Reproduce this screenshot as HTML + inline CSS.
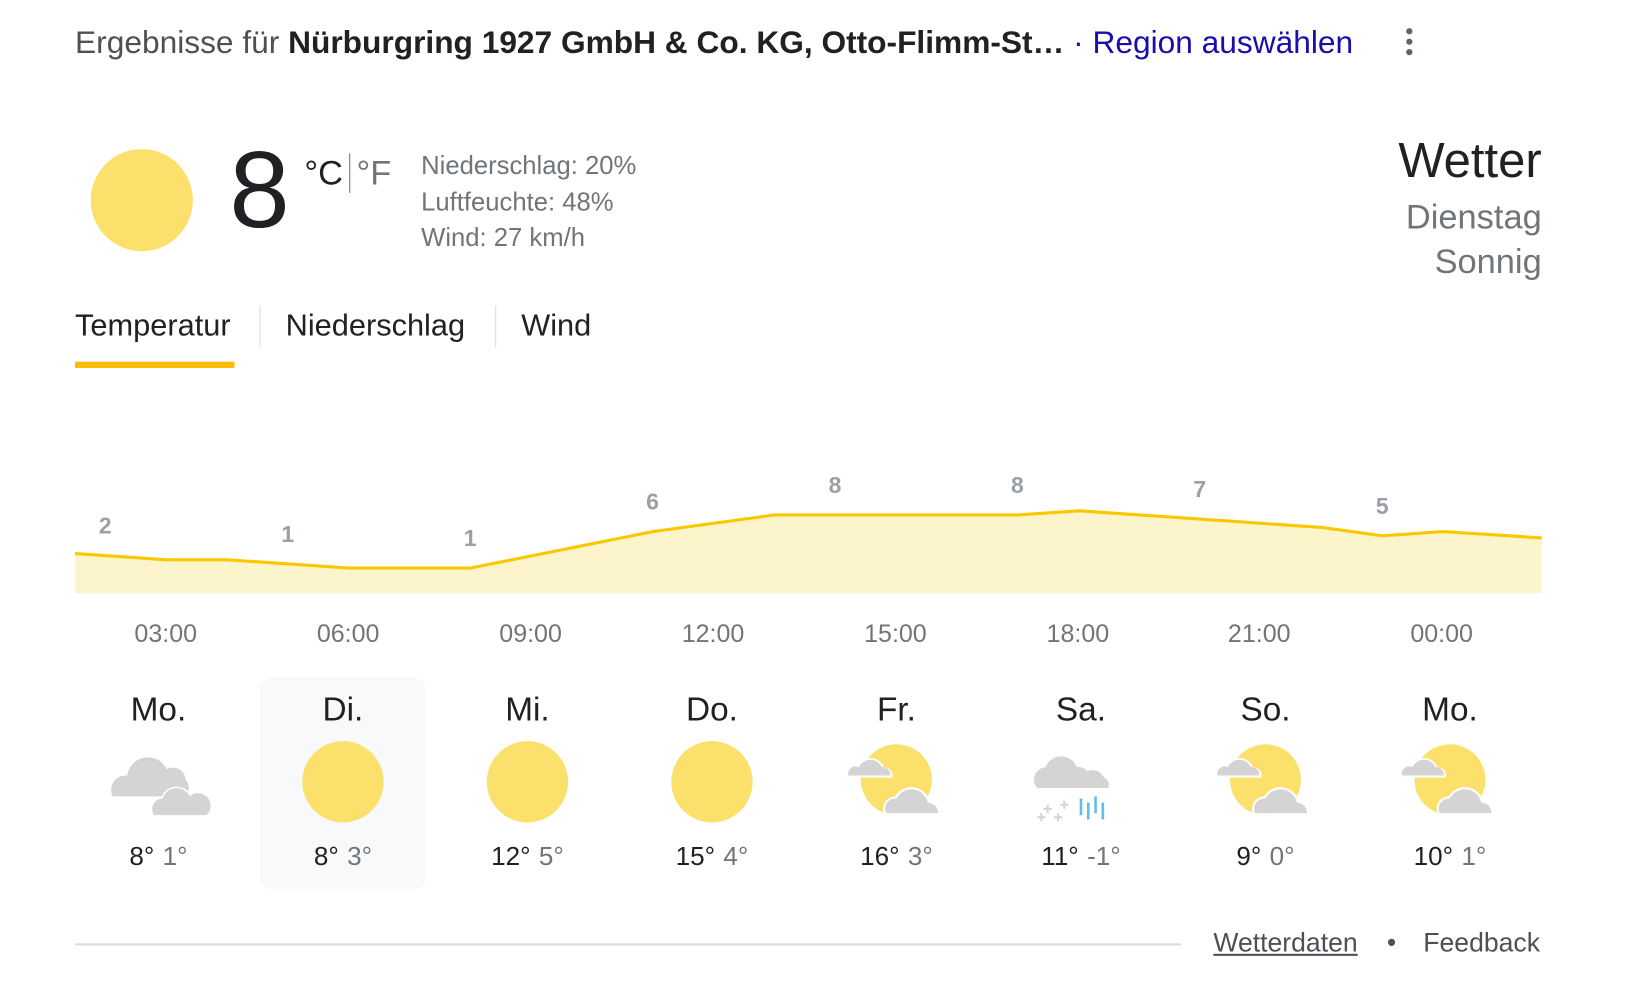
<!DOCTYPE html>
<html><head><meta charset="utf-8"><style>
html,body{margin:0;padding:0;background:#fff;overflow:hidden;width:1634px;height:1004px}
#w{position:absolute;left:0;top:0;width:1570px;height:965px;transform:scale(1.0424);transform-origin:0 0;font-family:"Liberation Sans",Arial,sans-serif;color:#202124}
.a{position:absolute;white-space:nowrap}
.g{color:#70757a}
.day{position:absolute;top:650px;width:160px;height:203px;text-align:center}
.day .n{position:absolute;top:12px;left:0;width:100%;font-size:32px;color:#202124}
.day svg{position:absolute;top:58px;left:30px}
.day .t{position:absolute;top:158px;left:0;width:100%;font-size:25px}
.day .t span{color:#70757a;margin-left:8px}
.tl{position:absolute;top:595px;font-size:24px;color:#70757a;width:100px;text-align:center}
.cl{position:absolute;top:470px;font-size:22px;font-weight:bold;color:#9aa0a6;width:40px;text-align:center}
</style></head><body><div id="w">
<div class="a" style="left:72px;top:24px;font-size:30.4px;color:#4d5156">Ergebnisse für <b style="color:#202124">Nürburgring 1927 GmbH &amp; Co. KG, Otto-Flimm-St…</b> <span style="color:#1a0dab">· Region auswählen</span></div>
<svg class="a" style="left:1346px;top:26px" width="12" height="28"><circle cx="6" cy="4" r="3" fill="#5f6368"/><circle cx="6" cy="14" r="3" fill="#5f6368"/><circle cx="6" cy="24" r="3" fill="#5f6368"/></svg>
<div class="a" style="left:87px;top:143px;width:98px;height:98px;border-radius:50%;background:#fbe06b"></div>
<div class="a" style="left:220px;top:128px;font-size:104px;line-height:110px">8</div>
<div class="a" style="left:292px;top:147px;font-size:33px;color:#202124">°C<span style="display:inline-block;width:1px;height:38px;background:#70757a;margin:0 6px;vertical-align:-8px"></span><span style="color:#70757a">°F</span></div>
<div class="a g" style="left:404px;top:143px;font-size:24.6px;line-height:34.5px">Niederschlag: 20%<br>Luftfeuchte: 48%<br>Wind: 27 km/h</div>
<div class="a" style="left:1479px;transform:translateX(-100%);top:126px;font-size:47px">Wetter</div>
<div class="a g" style="left:1479px;transform:translateX(-100%);top:186px;font-size:33px;text-align:right;line-height:43px">Dienstag<br>Sonnig</div>
<div class="a" style="left:72px;top:296px;font-size:29.5px">Temperatur</div>
<div class="a" style="left:249px;top:293px;width:1px;height:40px;background:#dadce0"></div>
<div class="a" style="left:274px;top:296px;font-size:29.5px">Niederschlag</div>
<div class="a" style="left:475px;top:293px;width:1px;height:40px;background:#dadce0"></div>
<div class="a" style="left:500px;top:296px;font-size:29.5px">Wind</div>
<div class="a" style="left:72px;top:347px;width:153px;height:6px;background:#fbbc04"></div>
<svg class="a" style="left:0;top:0" width="1550" height="600">
<path d="M72,531 L160,537 L218,537 L335,545 L451,545 L626,510 L743,494 L976,494 L1035,490 L1268,506 L1326,514 L1384,510 L1479,516 L1479,569 L72,569Z" fill="#fcf5cc"/>
<path d="M72,531 L160,537 L218,537 L335,545 L451,545 L626,510 L743,494 L976,494 L1035,490 L1268,506 L1326,514 L1384,510 L1479,516" fill="none" stroke="#fbc800" stroke-width="3"/>
</svg>
<div class="cl" style="left:81px;top:492px">2</div><div class="cl" style="left:256px;top:500px">1</div><div class="cl" style="left:431px;top:504px">1</div><div class="cl" style="left:606px;top:469px">6</div><div class="cl" style="left:781px;top:453px">8</div><div class="cl" style="left:956px;top:453px">8</div><div class="cl" style="left:1131px;top:457px">7</div><div class="cl" style="left:1306px;top:473px">5</div>
<div class="tl" style="left:109px">03:00</div><div class="tl" style="left:284px">06:00</div><div class="tl" style="left:459px">09:00</div><div class="tl" style="left:634px">12:00</div><div class="tl" style="left:809px">15:00</div><div class="tl" style="left:984px">18:00</div><div class="tl" style="left:1158px">21:00</div><div class="tl" style="left:1333px">00:00</div>
<div class="day" style="left:72px"><div class="n">Mo.</div><svg width="100" height="90"><path d="M6,56 a14,14 0 0 1 14,-20 a20,20 0 0 1 38,-6 a12,12 0 0 1 18,10 a10,10 0 0 1 -2,16Z" fill="#d4d4d4"/><path d="M46,74 a10,10 0 0 1 8,-16 a14,14 0 0 1 26,-2 a10,10 0 0 1 16,18Z" fill="#fff" stroke="#fff" stroke-width="3"/><path d="M46,74 a10,10 0 0 1 8,-16 a14,14 0 0 1 26,-2 a10,10 0 0 1 16,18Z" fill="#d4d4d4"/></svg><div class="t">8°<span>1°</span></div></div>
<div class="day" style="left:249px;background:#f8f9fa;border-radius:12px"><div class="n">Di.</div><svg width="100" height="90"><circle cx="50" cy="42" r="39" fill="#fbe06b"/></svg><div class="t">8°<span>3°</span></div></div>
<div class="day" style="left:426px"><div class="n">Mi.</div><svg width="100" height="90"><circle cx="50" cy="42" r="39" fill="#fbe06b"/></svg><div class="t">12°<span>5°</span></div></div>
<div class="day" style="left:603px"><div class="n">Do.</div><svg width="100" height="90"><circle cx="50" cy="42" r="39" fill="#fbe06b"/></svg><div class="t">15°<span>4°</span></div></div>
<div class="day" style="left:780px"><div class="n">Fr.</div><svg width="100" height="90"><circle cx="50" cy="40" r="34" fill="#fbe06b"/><path d="M2,38 a8,8 0 0 1 10,-10 a14,14 0 0 1 26,0 a8,8 0 0 1 8,10Z" fill="#fff"/><path d="M4,36 a7,7 0 0 1 10,-8 a12,12 0 0 1 22,0 a7,7 0 0 1 8,8Z" fill="#d4d4d4"/><path d="M40,72 a10,10 0 0 1 10,-14 a16,16 0 0 1 30,4 a10,10 0 0 1 10,10Z" fill="#fff" stroke="#fff" stroke-width="4"/><path d="M40,72 a10,10 0 0 1 10,-14 a16,16 0 0 1 30,4 a10,10 0 0 1 10,10Z" fill="#d4d4d4"/></svg><div class="t">16°<span>3°</span></div></div>
<div class="day" style="left:957px"><div class="n">Sa.</div><svg width="100" height="90"><path d="M8,48 a12,12 0 0 1 8,-20 a16,16 0 0 1 30,0 a10,10 0 0 1 4,20Z" fill="#d4d4d4"/><path d="M40,48 a8,8 0 0 1 10,-10 a12,12 0 0 1 22,0 a7,7 0 0 1 4,10Z" fill="#d4d4d4"/><g stroke="#d4d4d4" stroke-width="2"><path d="M14,68h8M18,64v8M8,76h8M12,72v8M24,76h8M28,72v8M30,64h8M34,60v8"/></g><g stroke="#5ec0e0" stroke-width="2.5"><path d="M50,58v16M57,62v16M64,56v16M71,62v16"/></g></svg><div class="t">11°<span>-1°</span></div></div>
<div class="day" style="left:1134px"><div class="n">So.</div><svg width="100" height="90"><circle cx="50" cy="40" r="34" fill="#fbe06b"/><path d="M2,38 a8,8 0 0 1 10,-10 a14,14 0 0 1 26,0 a8,8 0 0 1 8,10Z" fill="#fff"/><path d="M4,36 a7,7 0 0 1 10,-8 a12,12 0 0 1 22,0 a7,7 0 0 1 8,8Z" fill="#d4d4d4"/><path d="M40,72 a10,10 0 0 1 10,-14 a16,16 0 0 1 30,4 a10,10 0 0 1 10,10Z" fill="#fff" stroke="#fff" stroke-width="4"/><path d="M40,72 a10,10 0 0 1 10,-14 a16,16 0 0 1 30,4 a10,10 0 0 1 10,10Z" fill="#d4d4d4"/></svg><div class="t">9°<span>0°</span></div></div>
<div class="day" style="left:1311px"><div class="n">Mo.</div><svg width="100" height="90"><circle cx="50" cy="40" r="34" fill="#fbe06b"/><path d="M2,38 a8,8 0 0 1 10,-10 a14,14 0 0 1 26,0 a8,8 0 0 1 8,10Z" fill="#fff"/><path d="M4,36 a7,7 0 0 1 10,-8 a12,12 0 0 1 22,0 a7,7 0 0 1 8,8Z" fill="#d4d4d4"/><path d="M40,72 a10,10 0 0 1 10,-14 a16,16 0 0 1 30,4 a10,10 0 0 1 10,10Z" fill="#fff" stroke="#fff" stroke-width="4"/><path d="M40,72 a10,10 0 0 1 10,-14 a16,16 0 0 1 30,4 a10,10 0 0 1 10,10Z" fill="#d4d4d4"/></svg><div class="t">10°<span>1°</span></div></div>
<div class="a" style="left:72px;top:905px;width:1061px;height:2px;background:#dadce0"></div>
<div class="a" style="left:1164px;top:891px;font-size:25.5px;color:#4d5156"><span style="text-decoration:underline">Wetterdaten</span><span style="margin:0 26px 0 28px">•</span>Feedback</div>
</div></body></html>
